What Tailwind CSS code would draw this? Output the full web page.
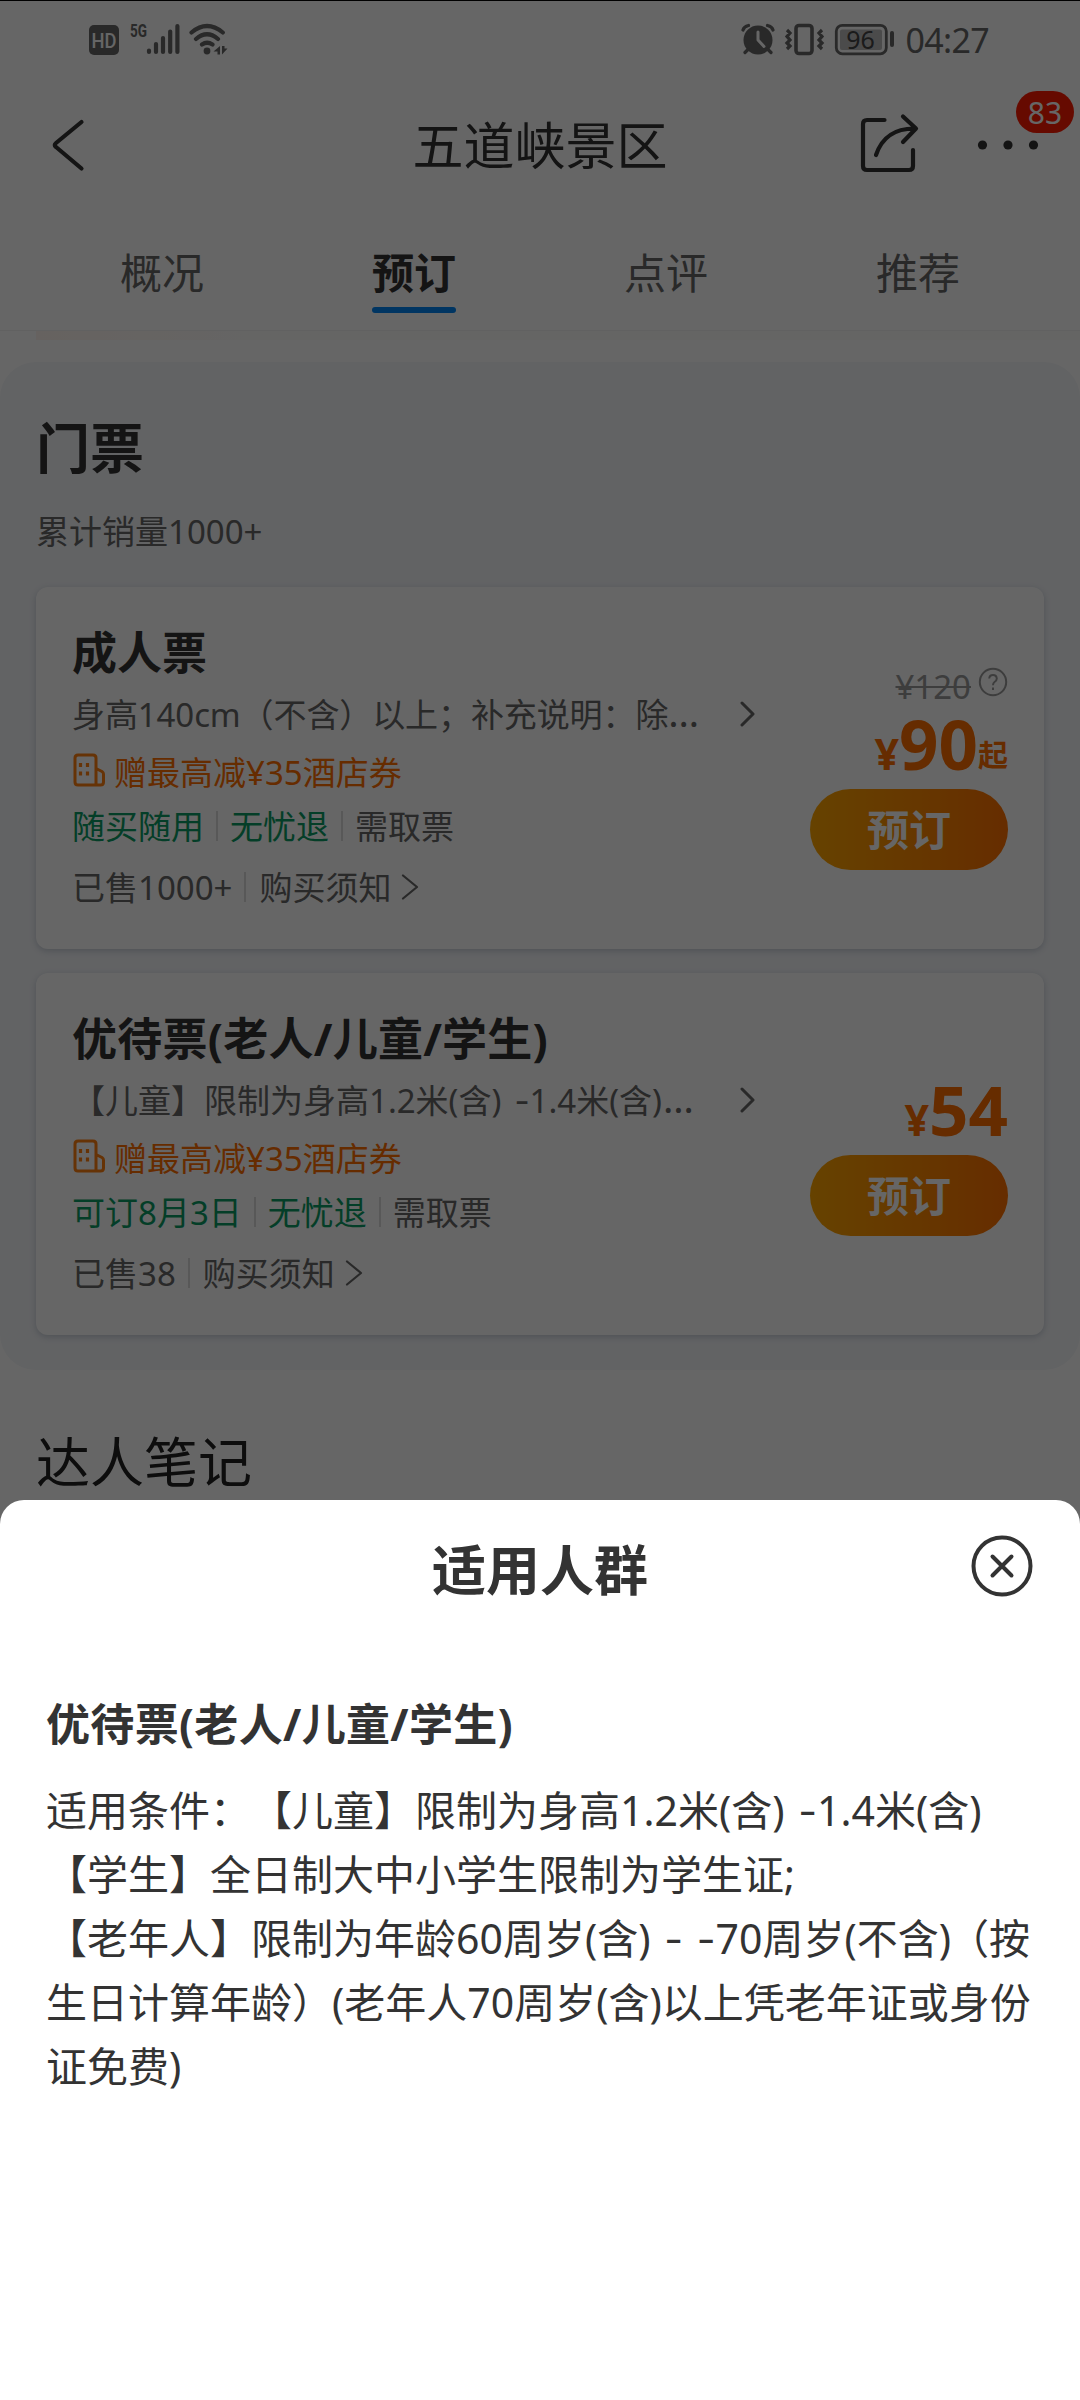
<!DOCTYPE html>
<html lang="zh-CN">
<head>
<meta charset="utf-8">
<title>五道峡景区</title>
<script src="https://cdn.jsdelivr.net/npm/@tailwindcss/browser@4"></script>
</head>
<body class="bg-white">
<div class="relative h-[2400px] w-[1080px] overflow-hidden bg-white font-['Noto_Sans','Noto_Sans_CJK_SC',sans-serif] text-[33px] leading-none whitespace-nowrap text-[#666] [text-spacing-trim:space-all]">

  <!-- status bar -->
  <div class="flex h-20 items-start justify-between border-t border-black pr-[91px] pl-[89px]">
    <svg class="mt-[19px]" width="140" height="40" viewBox="89 20 140 40" fill="none">
      <rect x="89" y="25" width="30" height="30" rx="5" fill="#666"/>
      <text x="104" y="47.500" text-anchor="middle" font-family="Roboto" font-weight="500" font-size="20" fill="#fff" textLength="25" lengthAdjust="spacingAndGlyphs">HD</text>
      <text x="130" y="37" font-family="Roboto" font-weight="700" font-size="19" fill="#666" textLength="17" lengthAdjust="spacingAndGlyphs">5G</text>
      <g stroke="#666" stroke-width="4.200" stroke-linecap="round"><path d="M149 50.500V52M156 44V52M163 38V52M170.200 31.500V52M177.400 26V52"/></g>
      <g stroke="#666" stroke-width="4.200" stroke-linecap="round"><path d="M191.500 32.500Q207 19.500 222.800 32.500M196 39Q207 29.500 218 39M202 44.500Q207 41 212.500 44.500"/></g>
      <circle cx="207" cy="51" r="3.400" fill="#666"/>
      <path d="M220 46V54.500H217.500V51.500H213.500ZM222 46H224.500V48.500H227.500L222 54.500Z" fill="#666"/>
    </svg>
    <div class="mt-[19px] flex items-center">
      <svg width="158" height="40" viewBox="740 20 158 40" fill="none">
        <circle cx="758" cy="40" r="14.500" fill="#666"/>
        <path d="M758 32V40L764 46.500" stroke="#fff" stroke-width="3" stroke-linecap="round" stroke-linejoin="round"/>
        <path d="M743 30Q744 26.500 748.500 25.500M773 30Q772 26.500 767.500 25.500M748 49.500L745 52.500M768 49.500L771 52.500" stroke="#666" stroke-width="3.200" stroke-linecap="round"/>
        <rect x="796" y="25.500" width="16" height="28" rx="3" stroke="#666" stroke-width="3.600"/>
        <path d="M787 30L790 33L787 36.500L790 40L787 43L790 46L787 49M822 30L819 33L822 36.500L819 40L822 43L819 46L822 49" stroke="#666" stroke-width="3.200"/>
        <rect x="836.300" y="25.300" width="50" height="28.500" rx="6" stroke="#666" stroke-width="2.800"/>
        <rect x="840" y="29.500" width="42" height="20.500" rx="2" fill="#bbb"/>
        <path d="M892 33V45" stroke="#666" stroke-width="4" stroke-linecap="round"/>
        <text x="860.500" y="48.500" text-anchor="middle" font-family="Noto Sans" font-size="25" fill="#444">96</text>
      </svg>
      <span class="ml-2 text-[34px] tracking-[-0.7px]">04:27</span>
    </div>
  </div>

  <!-- title bar -->
  <div class="relative flex h-[130px] items-center justify-center">
    <svg class="absolute top-[35px] left-[48px]" width="40" height="60" viewBox="48 115 40 60" fill="none" stroke="#333" stroke-width="4.200" stroke-linecap="round" stroke-linejoin="round"><path d="M81.500 122L56 143Q53.500 145 56 147L81.500 168.500"/></svg>
    <h1 class="text-[51px] text-[#333]">五道峡景区</h1>
    <svg class="absolute top-[30px] right-[35px]" width="190" height="70" viewBox="855 110 190 70" fill="none" stroke="#333" stroke-width="4.200" stroke-linecap="round" stroke-linejoin="round">
      <path d="M884.500 120H867Q863 120 863 124V166Q863 170 867 170H909Q913 170 913 166V150"/>
      <path d="M876 155Q885 128 915.500 128.500M903 116.500L916 128.500L903 142"/>
      <g fill="#333" stroke="none"><circle cx="982.500" cy="145" r="4.600"/><circle cx="1008" cy="145" r="4.600"/><circle cx="1033.500" cy="145" r="4.600"/></g>
    </svg>
    <div class="absolute top-[11px] right-[6px] flex h-[42px] w-[58px] items-center justify-center rounded-full bg-[#ff1900] pt-px text-[30px] text-white">83</div>
  </div>

  <!-- tabs -->
  <div class="grid h-[121px] grid-cols-4 border-b border-[#f2f2f2] px-9 text-[42px]">
    <div class="flex justify-center pt-[42px]">概况</div>
    <div class="flex flex-col items-center pt-[42px] font-bold text-[#333]">预订<div class="mt-[13px] h-[6px] w-[84px] rounded-full bg-[#0086f6]"></div></div>
    <div class="flex justify-center pt-[42px]">点评</div>
    <div class="flex justify-center pt-[42px]">推荐</div>
  </div>
  <div class="h-[31px] pl-9"><div class="h-[9px] bg-linear-to-r from-[#fff6f0] to-[#fdfcfa] to-20%"></div></div>

  <!-- tickets -->
  <section class="h-[1008px] rounded-[36px] bg-[#f5f7fa] px-9 pt-[59px]">
    <h2 class="h-[54px] text-[54px] font-bold text-[#333]">门票</h2>
    <p class="mt-[40px] h-[72px]">累计销量1000+</p>
    <div class="flex flex-col gap-6">
      <article class="flex h-[362px] justify-between rounded-xl bg-white px-9 shadow-[0_2px_6px_rgba(60,80,110,0.25)]">
        <div class="pt-[35px]">
          <h3 class="flex h-[60px] items-center text-[45px] font-bold text-[#333]">成人票</h3>
          <div class="flex h-16 w-[684px] items-center justify-between">
            <span class="flex items-baseline tracking-[-0.1px]">身高140cm（不含）以上；补充说明：除<span class="text-[39px] leading-[20px]">…</span></span>
            <svg width="16" height="28" viewBox="0 0 16 28" fill="none" stroke="#666" stroke-width="3" stroke-linecap="round" stroke-linejoin="round"><path d="M2 3L13 14L2 25"/></svg>
          </div>
          <div class="flex h-[52px] items-center gap-[9px] text-[#ff6e00]">
            <svg class="-mt-1" width="33" height="34" viewBox="0 0 33 34" fill="none" stroke="#ff7f10" stroke-width="3" stroke-linejoin="round"><path d="M24 32H6Q3 32 3 29V5Q3 2 6 2H21Q24 2 24 5V32ZM24 15.500L30 18.500Q31.500 19.500 31.500 21V29Q31.500 32 28.500 32H24"/><path d="M8.500 10v4M15.500 10v4M8.500 18.500v4M15.500 18.500v4" stroke-width="3.200"/></svg>
            <span>赠最高减¥35酒店券</span>
          </div>
          <div class="flex h-14 items-center text-[#0c9c64]">随买随用<i class="mx-3 h-[30px] w-[2px] bg-[#ddd]"></i>无忧退<i class="mx-3 h-[30px] w-[2px] bg-[#ddd]"></i><span class="text-[#666]">需取票</span></div>
          <div class="flex h-[66px] items-center">已售1000+<i class="mr-[13px] ml-3 h-[30px] w-[2px] bg-[#ddd]"></i>购买须知<svg class="ml-[10px]" width="18" height="26" viewBox="0 0 18 26" fill="none" stroke="#666" stroke-width="2.200" stroke-linecap="round" stroke-linejoin="round"><path d="M2 1.500L16 13L2 24.500"/></svg></div>
        </div>
        <div class="flex w-[198px] flex-col items-end pt-[82px]">
          <div class="flex h-9 items-center text-[#999]"><span class="-mt-[2px] line-through decoration-2">¥120</span>
            <svg class="-mt-[10px] ml-[7px]" width="30" height="30" viewBox="0 0 30 30" fill="none" stroke="#999" stroke-width="2"><circle cx="15" cy="15" r="13.200"/><path d="M11.200 11.500Q11.500 8 15 8T18.800 11.500Q18.800 13.500 16.500 15Q15 16 15 18.300M15 20.500V23" /></svg></div>
          <div class="flex h-[84px] items-baseline font-bold text-[#ff6e00]"><span class="text-[43px]">¥</span><span class="text-[69px] leading-[77px]">90</span><span class="-translate-y-1 text-[30px]">起</span></div>
          <button class="h-[81px] w-[198px] shrink-0 rounded-full bg-linear-to-r from-[#ffa600] to-[#ff7000] text-[42px] leading-[80px] font-bold text-white">预订</button>
        </div>
      </article>
      <article class="flex h-[362px] justify-between rounded-xl bg-white px-9 shadow-[0_2px_6px_rgba(60,80,110,0.25)]">
        <div class="pt-[35px]">
          <h3 class="flex h-[60px] items-center text-[45px] font-bold tracking-[0.25px] text-[#333]">优待票(老人/儿童/学生)</h3>
          <div class="flex h-16 w-[684px] items-center justify-between">
            <span class="flex items-baseline">【儿童】限制为身高1.2米(含)<span class="ml-[13px] font-['Inter'] leading-[20px]">-</span>1.4米(含)<span class="ml-px text-[39px] leading-[20px] tracking-[2px]">…</span></span>
            <svg width="16" height="28" viewBox="0 0 16 28" fill="none" stroke="#666" stroke-width="3" stroke-linecap="round" stroke-linejoin="round"><path d="M2 3L13 14L2 25"/></svg>
          </div>
          <div class="flex h-[52px] items-center gap-[9px] text-[#ff6e00]">
            <svg class="-mt-1" width="33" height="34" viewBox="0 0 33 34" fill="none" stroke="#ff7f10" stroke-width="3" stroke-linejoin="round"><path d="M24 32H6Q3 32 3 29V5Q3 2 6 2H21Q24 2 24 5V32ZM24 15.500L30 18.500Q31.500 19.500 31.500 21V29Q31.500 32 28.500 32H24"/><path d="M8.500 10v4M15.500 10v4M8.500 18.500v4M15.500 18.500v4" stroke-width="3.200"/></svg>
            <span>赠最高减¥35酒店券</span>
          </div>
          <div class="flex h-14 items-center text-[#0c9c64]">可订8月3日<i class="mx-3 h-[30px] w-[2px] bg-[#ddd]"></i>无忧退<i class="mx-3 h-[30px] w-[2px] bg-[#ddd]"></i><span class="text-[#666]">需取票</span></div>
          <div class="flex h-[66px] items-center">已售38<i class="mr-[13px] ml-3 h-[30px] w-[2px] bg-[#ddd]"></i>购买须知<svg class="ml-[10px]" width="18" height="26" viewBox="0 0 18 26" fill="none" stroke="#666" stroke-width="2.200" stroke-linecap="round" stroke-linejoin="round"><path d="M2 1.500L16 13L2 24.500"/></svg></div>
        </div>
        <div class="flex w-[198px] flex-col items-end pt-[98px]">
          <div class="flex h-[84px] items-baseline font-bold text-[#ff6e00]"><span class="text-[43px]">¥</span><span class="text-[69px] leading-[77px]">54</span></div>
          <button class="h-[81px] w-[198px] shrink-0 rounded-full bg-linear-to-r from-[#ffa600] to-[#ff7000] text-[42px] leading-[80px] font-bold text-white">预订</button>
        </div>
      </article>
    </div>
  </section>
  <h2 class="mt-[65px] ml-9 text-[54px] text-[#222]">达人笔记</h2>

  <div class="absolute inset-0 bg-black/60"></div>

  <!-- bottom sheet -->
  <div class="absolute inset-x-0 bottom-0 h-[900px] rounded-t-3xl bg-white px-[46px] text-[#333]">
    <div class="relative flex h-[139px] items-center justify-center">
      <h2 class="text-[54px] font-bold">适用人群</h2>
      <svg class="absolute top-[34px] right-0" width="64" height="64" viewBox="0 0 64 64" fill="none" stroke="#333" stroke-width="4" stroke-linecap="round"><circle cx="32" cy="32" r="28.500"/><path d="M22.500 22.500L41.500 41.500M41.500 22.500L22.500 41.500"/></svg>
    </div>
    <h3 class="mt-[63px] h-11 text-[44px] font-bold tracking-[0.35px]">优待票(老人/儿童/学生)</h3>
    <div class="mt-[32px] text-[41px] leading-[64px]">
      <p>适用条件：【儿童】限制为身高1.2米(含) <span class="ml-[3px] font-['Inter'] leading-none">-</span>1.4米(含)</p>
      <p>【学生】全日制大中小学生限制为学生证;</p>
      <p>【老年人】限制为年龄60周岁(含) <span class="ml-[3px] font-['Inter'] leading-none">-</span> <span class="ml-[3px] font-['Inter'] leading-none">-</span>70周岁(不含)<span class="-ml-[3px]">（按</span></p>
      <p>生日计算年龄）<span class="-ml-px">(老年人70周岁(含)以上凭老年证或身份</span></p>
      <p>证免费)</p>
    </div>
  </div>
</div>
</body>
</html>
